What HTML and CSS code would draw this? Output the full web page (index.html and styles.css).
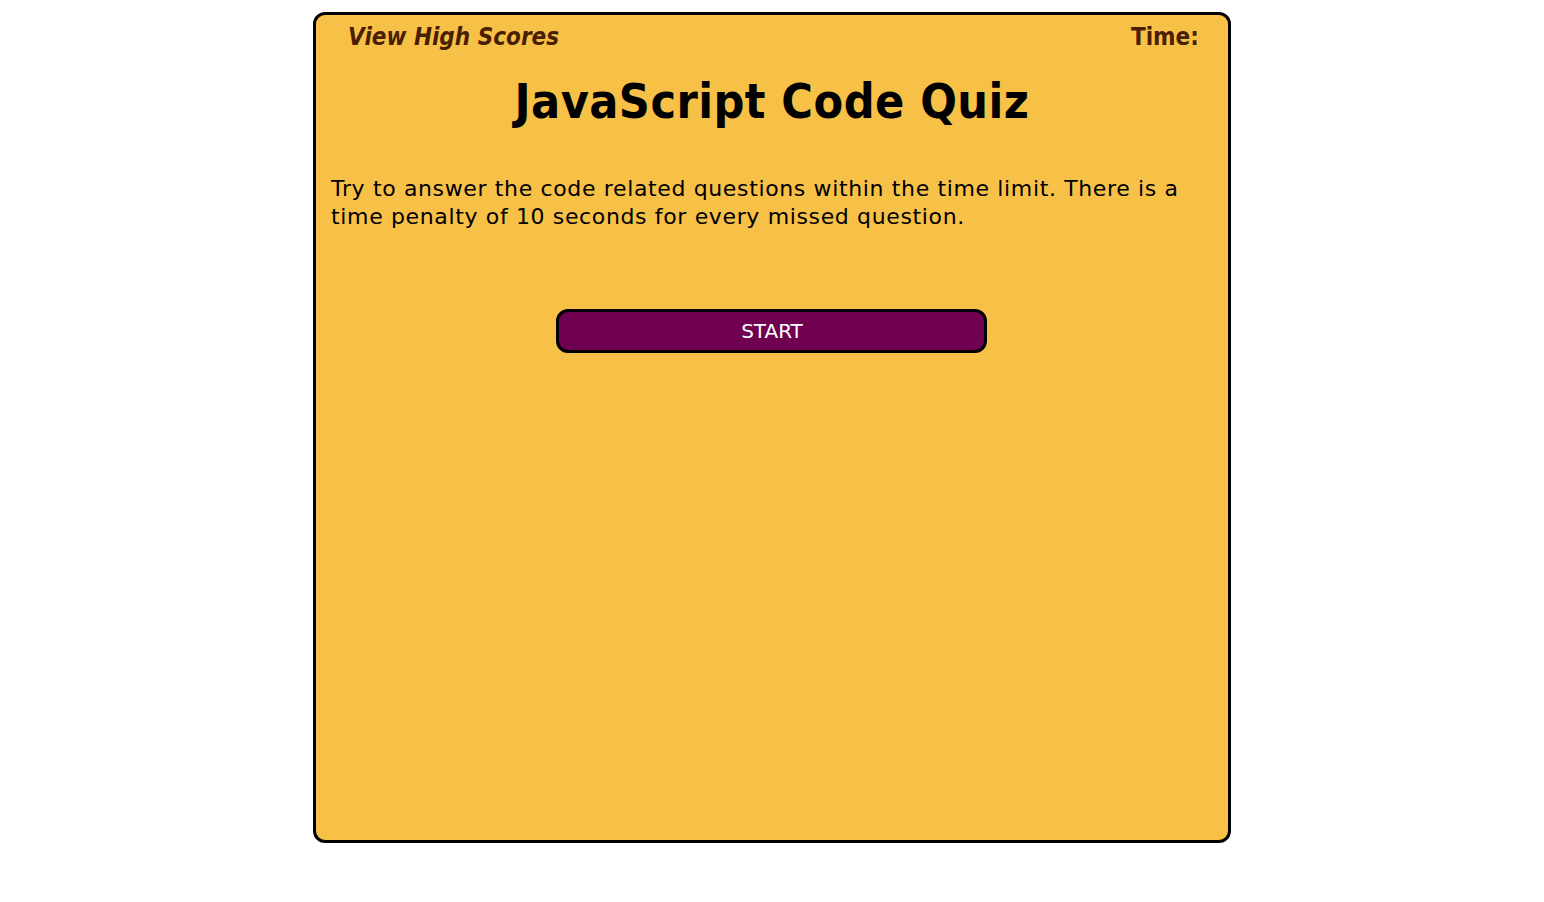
FILE: index.html
```html
<!DOCTYPE html>
<html lang="en">
<head>
<meta charset="utf-8">
<title>JavaScript Code Quiz</title>
<link rel="stylesheet" href="styles.css">
</head>
<body>
<main class="card">
  <header class="topbar">
    <a class="scores" href="#">View High Scores</a>
    <span class="timer">Time:</span>
  </header>
  <h1 class="title">JavaScript Code Quiz</h1>
  <p class="intro">Try to answer the code related questions within the time limit. There is a time penalty of 10 seconds for every missed question.</p>
  <div class="actions">
    <button class="start" type="button">START</button>
  </div>
</main>
</body>
</html>
```

FILE: styles.css
```css
body {
  margin: 8px;
  font-family: "DejaVu Sans", "Liberation Sans", sans-serif;
  background: #ffffff;
}

.card {
  box-sizing: border-box;
  width: calc(60% + 1px);
  height: 831px;
  margin: 4px auto 0;
  background: #f7c148;
  border: 3px solid #000;
  border-radius: 12px;
  padding: 0 15px;
}

.topbar {
  display: flex;
  justify-content: space-between;
  align-items: center;
  padding: 8px 14px 0 17px;
  line-height: 28px;
  font-family: "DejaVu Sans Condensed", "DejaVu Sans", sans-serif;
}

.scores {
  color: #4a1e00;
  font-style: italic;
  font-weight: bold;
  font-size: 24px;
  text-decoration: none;
}

.timer {
  color: #4a1e00;
  font-weight: bold;
  font-size: 24px;
}

.title {
  margin: 22px 0 0;
  text-align: center;
  font-family: "DejaVu Sans Condensed", "DejaVu Sans", sans-serif;
  font-size: 48px;
  font-weight: bold;
  letter-spacing: 0.45px;
  color: #000;
}

.intro {
  margin: 46px 0 0;
  font-size: 22px;
  line-height: 28px;
  letter-spacing: 0.64px;
  color: #000;
}

.actions {
  display: flex;
  justify-content: center;
  margin-top: 78px;
}

.start {
  box-sizing: border-box;
  width: 431px;
  height: 44px;
  background: #700050;
  color: #fff;
  border: 3px solid #000;
  border-radius: 12px;
  font-family: inherit;
  font-size: 20px;
}
```
